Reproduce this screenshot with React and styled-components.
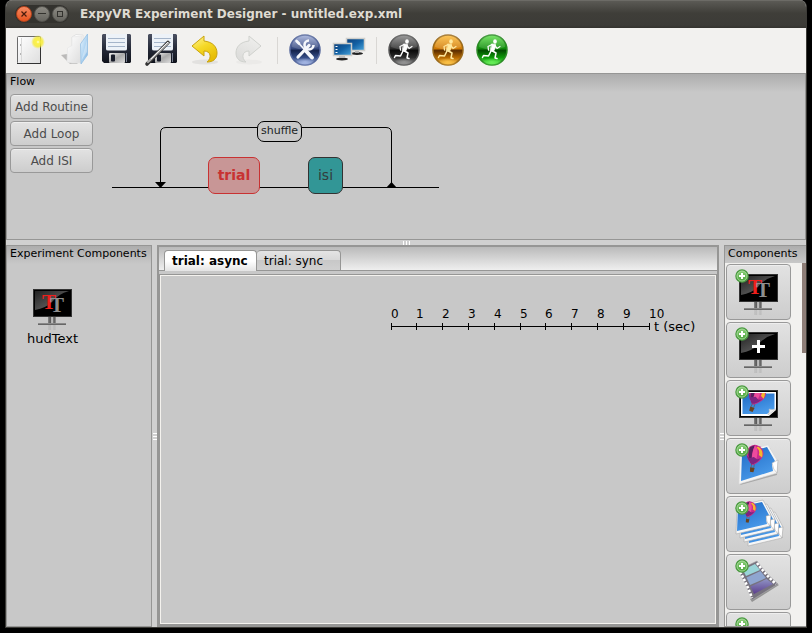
import React, { useState } from "react";
import styled, { createGlobalStyle, css } from "styled-components";

const GlobalStyle = createGlobalStyle`
  * { box-sizing: border-box; }
  body { margin: 0; background: #000; font-family: "DejaVu Sans", Verdana, sans-serif; color: #000; }
  button { font-family: inherit; padding: 0; margin: 0; }
  svg { display: block; }
`;

const line = "#969695";
const face = "#c8c8c8";

const Screen = styled.div`
  height: 100vh;
  padding: 0 5px 5px;
  background: #000;
`;

const Frame = styled.main`
  height: 100%;
  display: flex;
  flex-direction: column;
  overflow: hidden;
  border: 1px solid #3c3b37;
  border-top: 0;
  border-radius: 7px 7px 0 0;
  background: #d0d0d0;
`;

const TitleBar = styled.header`
  flex: none;
  height: 28px;
  display: flex;
  align-items: center;
  gap: 11px;
  padding: 0 9px 2px;
  background: linear-gradient(#5b5a55, #3f3e39 45%, #3c3b37 90%, #33322e);
  border-top: 1px solid #6c6b66;
`;

const Controls = styled.div`
  display: flex;
  align-items: center;
  gap: 2px;
  padding: 1px;
  border-radius: 10px;
  background: #33322e;
`;

const ControlButton = styled.button`
  width: 16px;
  height: 16px;
  border: 1px solid ${(p) => (p.$close ? "#b5441d" : "#55544f")};
  border-radius: 50%;
  color: ${(p) => (p.$close ? "#4a1c0c" : "#33322e")};
  background: ${(p) =>
    p.$close ? "linear-gradient(#f58a62, #e8541f)" : "linear-gradient(#8c8a83, #66655f)"};
`;

const Title = styled.h1`
  margin: 0;
  font-size: 12px;
  line-height: 16px;
  font-weight: bold;
  white-space: nowrap;
  color: #dfdbd2;
`;

const Toolbar = styled.div`
  flex: none;
  height: 45px;
  display: flex;
  align-items: flex-start;
  padding-left: 2px;
  background: #f2f1ef;
`;

const ToolButton = styled.button`
  width: 44px;
  height: 44px;
  border: 0;
  background: none;
`;

const Separator = styled.span`
  align-self: center;
  width: 1px;
  height: 27px;
  margin: 0 5px;
  background: #d9d7d4;
`;

const panel = css`
  border: 1px solid ${line};
  background: linear-gradient(#adadad, ${face} 18px);
`;

const PanelTitle = styled.h2`
  margin: 0;
  padding: 0 3px;
  font-size: 11px;
  line-height: 16px;
  font-weight: normal;
  white-space: nowrap;
`;

const FlowPanel = styled.section`
  ${panel}
  flex: none;
  height: 167px;
`;

const FlowBody = styled.div`
  display: flex;
  padding: 4px 3px 0;
`;

const FlowActions = styled.div`
  flex: none;
  width: 83px;
  display: flex;
  flex-direction: column;
  gap: 2px;
`;

const raised = css`
  border: 1px solid #999;
  border-radius: 4px;
  background: linear-gradient(#e2e2e2, #cdcdcd);
  box-shadow: inset 0 1px 0 #eee;
`;

const ActionButton = styled.button`
  ${raised}
  height: 25px;
  font-size: 12px;
  line-height: 16px;
  white-space: nowrap;
  color: #4c4c4c;
`;

const FlowCanvas = styled.div`
  position: relative;
  flex: 1;
  height: 140px;
`;

const FlowNode = styled.button`
  position: absolute;
  left: ${(p) => p.$x}px;
  top: ${(p) => p.$y}px;
  width: ${(p) => p.$w}px;
  height: ${(p) => p.$h}px;
  padding-bottom: 2px;
  border: 1px solid ${(p) => p.$edge};
  border-radius: 7px;
  background: ${(p) => p.$fill};
  color: ${(p) => p.$ink};
  font-size: ${(p) => p.$size}px;
  line-height: 16px;
  font-weight: ${(p) => (p.$bold ? "bold" : "normal")};
`;

const Sash = styled.div`
  flex: none;
  display: flex;
  align-items: center;
  justify-content: center;
  gap: 2px;
  flex-direction: ${(p) => (p.$vertical ? "column" : "row")};
  height: ${(p) => (p.$vertical ? "auto" : "5px")};
  background: #d0d0d0;
`;

const Grip = styled.i`
  width: ${(p) => (p.$vertical ? 4 : 1)}px;
  height: ${(p) => (p.$vertical ? 1 : 4)}px;
  background: #fff;
`;

const Lower = styled.div`
  flex: 1;
  min-height: 0;
  display: grid;
  grid-template-columns: 146px 5px minmax(0, 1fr) 5px 82px;
  grid-template-rows: minmax(0, 1fr);
`;

const SidePanel = styled.section`
  ${panel}
`;

const ComponentItem = styled.button`
  display: block;
  margin: 17px 0 0 13px;
  border: 0;
  background: none;
  font-size: 13px;
  line-height: 16px;
`;

const Notebook = styled.section`
  display: flex;
  flex-direction: column;
  border: 2px solid ${line};
  background: ${face};
`;

const TabStrip = styled.div`
  flex: none;
  height: 24px;
  display: flex;
  align-items: flex-end;
  padding-left: 5px;
  border-bottom: 1px solid ${line};
  background: linear-gradient(#bababa, #efefef);
`;

const Tab = styled.button`
  height: ${(p) => (p.$active ? 21 : 20)}px;
  width: ${(p) => (p.$active ? 93 : 84)}px;
  margin-bottom: ${(p) => (p.$active ? -1 : 0)}px;
  padding-left: 7px;
  text-align: left;
  border: 1px solid ${line};
  border-left-width: ${(p) => (p.$active ? 1 : 0)}px;
  border-bottom: 0;
  border-radius: 4px 4px 0 0;
  background: ${(p) =>
    p.$active
      ? "linear-gradient(#fff, #fff 50%, #e4e4e4)"
      : "linear-gradient(#e4e4e4, #d8d8d8 48%, #c8c8c8 50%, #d0d0d0)"};
  font-size: 12px;
  line-height: 16px;
  font-weight: ${(p) => (p.$active ? "bold" : "normal")};
  white-space: nowrap;
`;

const TabBody = styled.div`
  flex: 1;
  min-height: 0;
  margin: 4px 1px 1px;
  padding: 30px 0 0 226px;
  overflow: hidden;
  border: 1px solid #f4f2ee;
  outline: 1px solid ${line};
`;

const Palette = styled.section`
  display: flex;
  flex-direction: column;
  min-height: 0;
  border: 1px solid ${line};
  border-right: 0;
  background: #f2f1ef;
`;

const PaletteTitle = styled(PanelTitle)`
  flex: none;
  height: 17px;
  background: linear-gradient(#adadad, ${face});
`;

const PaletteBody = styled.div`
  flex: 1;
  min-height: 0;
  display: flex;
  justify-content: space-between;
`;

const PaletteList = styled.div`
  display: flex;
  flex-direction: column;
  gap: 2px;
  padding: 1px;
  overflow-y: auto;
  scrollbar-width: none;
`;

const PaletteButton = styled.button`
  ${raised}
  flex: none;
  width: 65px;
  height: 56px;
  overflow: hidden;
  svg { margin: -1px; }
`;

const ScrollThumb = styled.div`
  width: 4px;
  height: 90px;
  background: #8d7d77;
`;

function Tool({ label, children }) {
  return (
    <ToolButton aria-label={label}>
      <svg width="44" height="44" viewBox="0 0 44 44">{children}</svg>
    </ToolButton>
  );
}

function Stops({ list }) {
  return list.map(([o, c, a = 1]) => <stop key={o} offset={o} stopColor={c} stopOpacity={a} />);
}

function NewIcon() {
  return (
    <>
      <defs>
        <linearGradient id="paper" x2="1" y2="1"><Stops list={[[0, "#fff"], [1, "#dedede"]]} /></linearGradient>
        <radialGradient id="glow"><Stops list={[[0, "#ffffd0"], [0.25, "#fbf24a"], [0.65, "#f7ec2e", 0.8], [1, "#f7ec2e", 0]]} /></radialGradient>
      </defs>
      <rect x="9.500" y="8.500" width="23" height="27" rx="1" fill="url(#paper)" stroke="#6b6b6b" />
      <path d="M9 35.500H33M32.500 12V35" stroke="#333" fill="none" />
      <path d="M13.500 10V34" stroke="#d8d8d8" />
      <path d="M12 17h1M12 26h1" stroke="#777" />
      <circle cx="30" cy="14" r="7" fill="url(#glow)" />
    </>
  );
}

function OpenIcon() {
  return (
    <>
      <defs>
        <linearGradient id="flap" x2="1" y2="1"><Stops list={[[0, "#e9f5fe"], [0.5, "#b4d7f3"], [1, "#79afde"]]} /></linearGradient>
        <linearGradient id="fold" x2="1" y2="1"><Stops list={[[0, "#fff"], [1, "#dcdcdc"]]} /></linearGradient>
      </defs>
      <path d="M9 27L18 36H26L15 26Z" fill="#777" opacity=".45" />
      <path d="M20 9L24 6.500L31 7V30L20 30Z" fill="#fcfcfc" stroke="#e2e2e2" />
      <path d="M15.500 20L20 17.500V9L30 8V35H20L15 34Z" fill="url(#fold)" stroke="#e6e6e6" strokeWidth=".7" />
      <path d="M28.500 16L35.500 6V27L29 36Z" fill="url(#flap)" stroke="#8ebce2" strokeWidth=".7" />
      <path d="M29.500 32L35 12V24Z" fill="#fff" opacity=".35" />
    </>
  );
}

function Floppy({ x }) {
  return (
    <g transform={`translate(${x} 6)`}>
      <defs>
        <linearGradient id="disk" x2="0" y2="1"><Stops list={[[0, "#4c5162"], [0.5, "#252a38"], [1, "#10131c"]]} /></linearGradient>
        <linearGradient id="shutter" x2="1" y2="1"><Stops list={[[0, "#f2f2f2"], [0.5, "#a9a9a9"], [1, "#ddd"]]} /></linearGradient>
      </defs>
      <path d="M1 0H28L29 1V28L28 29H2L0 27V1Z" fill="url(#disk)" />
      <path d="M4 0H25V15Q25 16.500 23 16.500H6Q4 16.500 4 15Z" fill="#edf2f8" />
      <path d="M6 4.500H23M6 8.500H23M6 12.500H23" stroke="#a5b5ca" />
      <rect x="7" y="19" width="16" height="10" rx="1" fill="url(#shutter)" />
      <rect x="9" y="20.500" width="4" height="7" rx="1" fill="#171b28" />
      <path d="M24.500 19V28" stroke="#777e8f" />
    </g>
  );
}

function Pen() {
  return (
    <>
      <path d="M7 36L28 14.500" stroke="#333" strokeWidth="3.600" strokeLinecap="round" />
      <path d="M8 34L28 15" stroke="#aaa" strokeWidth="2.400" strokeLinecap="round" />
      <path d="M11 31L28 14" stroke="#f2f2f2" strokeWidth="1" />
    </>
  );
}

function Arrow({ muted }) {
  const id = muted ? "arrowMuted" : "arrowGold";
  return (
    <>
      <defs>
        <linearGradient id={id} x2=".5" y2="1">
          <Stops list={muted ? [[0, "#f1f1ef"], [1, "#dddddb"]] : [[0, "#fff6a0"], [0.5, "#f5d927"], [1, "#e7bd05"]]} />
        </linearGradient>
      </defs>
      <ellipse cx="21" cy="34" rx="13" ry="2.500" fill="#888" opacity={muted ? 0.06 : 0.15} />
      <path
        transform={muted ? "matrix(-1 0 0 1 41 0)" : undefined}
        d="M8 18L20 8V13C29 14 33 19 33 25C33 31 29 34 23 34C28 30 27 23 20 23V28Z"
        fill={`url(#${id})`}
        stroke={muted ? "#cfd1cd" : "#c9a30c"}
        strokeLinejoin="round"
      />
    </>
  );
}

function Orb({ id, colors, edge, children }) {
  return (
    <>
      <defs>
        <linearGradient id={id} x2="0" y2="1"><Stops list={[[0, colors[0]], [0.45, colors[1]], [0.52, colors[2]], [0.75, colors[3]], [1, colors[4]]]} /></linearGradient>
        <radialGradient id={`${id}Glow`}><Stops list={[[0, colors[4], 0.9], [1, colors[4], 0]]} /></radialGradient>
      </defs>
      <circle cx="22" cy="22" r="15" fill={`url(#${id})`} stroke={edge} strokeWidth="1.500" />
      <ellipse cx="22" cy="34" rx="10" ry="4" fill={`url(#${id}Glow)`} />
      <path d="M9 19A13 13 0 0 1 35 19Q22 24 9 19Z" fill="#fff" opacity=".15" />
      {children}
    </>
  );
}

function Runner({ color }) {
  return (
    <g fill="none" stroke={color} strokeLinecap="round" strokeLinejoin="round">
      <ellipse cx="25" cy="13.500" rx="1.800" ry="2.200" fill={color} stroke="none" />
      <path d="M22 16L25.500 16.500L25.500 19L23.500 23.500L20.500 23Z" fill={color} strokeWidth=".8" />
      <path d="M22 16.500L18 18.500L18.500 22" strokeWidth="1.300" />
      <path d="M25.500 18L27 20.500L30 18.500" strokeWidth="1.200" />
      <path d="M22.500 23L26 25L25 30L27 30.500" strokeWidth="1.500" />
      <path d="M21 23L18.500 28L13.500 27.500L12.500 29.500" strokeWidth="1.500" />
    </g>
  );
}

function ToolsMark() {
  return (
    <g fill="none" stroke="#f5f7fb" strokeLinecap="round">
      <path d="M15 29L26 17.500" strokeWidth="3.200" />
      <path d="M26 12.500A4.500 4.500 0 1 0 30.500 17" strokeWidth="2.600" strokeLinecap="butt" />
      <path d="M14.500 14L22 22" strokeWidth="1.800" />
      <path d="M23 23L29 29.500" strokeWidth="4" />
      <path d="M13.500 13L16 15.500" strokeWidth="2.600" />
    </g>
  );
}

function ScreensIcon() {
  return (
    <>
      <defs><linearGradient id="lcd" x2="1" y2="1"><Stops list={[[0, "#0c3e79"], [0.5, "#1261a4"], [1, "#4aa6dd"]]} /></linearGradient></defs>
      <ellipse cx="30" cy="25.500" rx="6" ry="1.500" fill="#222" />
      <path d="M28 22h4v3h-4z" fill="#aaa" />
      <rect x="19.500" y="10.500" width="18" height="12" fill="url(#lcd)" stroke="#cfcfcb" strokeWidth="1.500" />
      <ellipse cx="15" cy="31" rx="6" ry="1.500" fill="#222" />
      <path d="M12 28h6v2h-6z" fill="#bbb" />
      <rect x="6.500" y="15.500" width="18" height="12" fill="url(#lcd)" stroke="#cfcfcb" strokeWidth="1.500" />
      <path d="M8.500 18.500h2M8.500 21.500h2M8.500 24.500h2" stroke="#fff" />
    </>
  );
}

function Badge() {
  return (
    <g>
      <defs><linearGradient id="badge" x2="0" y2="1"><Stops list={[[0, "#8fd07d"], [1, "#46a236"]]} /></linearGradient></defs>
      <circle cx="16" cy="12" r="6" fill="url(#badge)" stroke="#4a9a40" strokeWidth="1.500" />
      <circle cx="16" cy="12" r="5" fill="none" stroke="#b3e0a6" strokeWidth=".8" />
      <path d="M16 9V15M13 12H19" stroke="#fff" strokeWidth="2" />
    </g>
  );
}

function Monitor({ children }) {
  return (
    <>
      <defs>
        <linearGradient id="glass" x2="1" y2="1"><Stops list={[[0, "#222"], [1, "#777"]]} /></linearGradient>
        <linearGradient id="stand"><Stops list={[[0, "#888"], [0.3, "#555"], [0.5, "#ddd"], [0.75, "#555"], [1, "#999"]]} /></linearGradient>
      </defs>
      <rect x="28" y="37" width="8" height="7" fill="url(#stand)" />
      <rect x="28" y="46" width="8" height="5" fill="url(#stand)" opacity=".15" />
      <path d="M18 45H46" stroke="#666" strokeWidth="2" />
      <path d="M18 44.500H46" stroke="#888" strokeWidth="1" />
      <rect x="13" y="10" width="39" height="28" fill="#000" />
      <rect x="13.500" y="10.500" width="38" height="27" fill="none" stroke="#333" />
      <path d="M15 12H49Q38 15 32 23Q26 29 15 31Z" fill="url(#glass)" />
      {children}
    </>
  );
}

function Letters() {
  return (
    <text fontFamily="Liberation Serif, serif" fontWeight="bold" fontSize="21">
      <tspan x="22" y="30" fill="#ee1f1c">T</tspan>
      <tspan x="30" y="33" fill="#8e8e8e">T</tspan>
    </text>
  );
}

function Balloon({ x, y, turn = 0, scale = 1 }) {
  return (
    <g transform={`translate(${x} ${y}) rotate(${turn}) scale(${scale})`}>
      <path d="M-9 -3A9.500 9.500 0 0 1 10 -3Q9 4 1 10H-1Q-8 4 -9 -3Z" fill="#c92a8c" />
      <path d="M-6 -9Q-9 0 -1 10Q-4 -2 -1 -12Z" fill="#57205f" />
      <path d="M-1 -12Q6 -7 2 9H0Q-4 0 -1 -12Z" fill="#ed4b9d" />
      <path d="M3 -11Q10 -8 9 0L5 -2Q6 -7 1 -10Z" fill="#f5b62c" />
      <path d="M-8 1L-4 3L0 1L4 3L8 1Q5 6 1 9H-1Q-6 6 -8 1Z" fill="#7d2581" />
      <path d="M-1 9V13M2 9V13" stroke="#655" strokeWidth=".7" />
      <path d="M-2 13H3L2.500 18H-1.500Z" fill="#69431e" />
    </g>
  );
}

function SkyPaint() {
  return <defs><linearGradient id="sky" x2=".5" y2="1"><Stops list={[[0, "#1f69c4"], [1, "#4a9bea"]]} /></linearGradient></defs>;
}

function MonitorPhoto() {
  return (
    <Monitor>
      <SkyPaint />
      <path d="M15 12H50V30L43 36H15Z" fill="#fff" />
      <path d="M16.500 13.500H48.500V29L41 34H16.500Z" fill="url(#sky)" />
      <path d="M42 35Q44 31 43 29Q47 30 50 29Z" fill="#eee" stroke="#bbb" strokeWidth=".5" />
      <clipPath id="photoArea"><path d="M16 13H49V34H16Z" /></clipPath>
      <g clipPath="url(#photoArea)"><Balloon x={30} y={16} turn={20} scale={0.9} /></g>
    </Monitor>
  );
}

function PhotoIcon() {
  return (
    <>
      <SkyPaint />
      <path d="M14 47L51 37L52 24L44 10Z" fill="#000" opacity=".2" />
      <path d="M14 14L42 7L51 22L48 26L51 35L13 46Z" fill="#f5f5f5" stroke="#ddd" strokeWidth=".6" />
      <path d="M16 16L41 9L49 23L46 27L47 33L15 43Z" fill="url(#sky)" />
      <path d="M46 25Q50 23 52 22L51 35Q47 32 46 25Z" fill="#fff" stroke="#aaa" strokeWidth=".5" />
      <Balloon x={28} y={18} turn={10} scale={0.9} />
    </>
  );
}

function PhotoStack() {
  return (
    <>
      <SkyPaint />
      {[3, 2, 1, 0].map((i) => (
        <g key={i} transform={`translate(${i * 4} ${i * 4})`}>
          <path d="M11 10L37 4L45 19L42 22L44 30L10 38Z" fill="#f7f7f7" stroke="#aaa" strokeWidth=".6" />
          <path d="M12 11L36 6L43 19L40 23L41 28L11 35Z" fill="url(#sky)" />
          <path d="M40 20L45 19L44 30Q40 27 40 20Z" fill="#fff" stroke="#999" strokeWidth=".5" />
        </g>
      ))}
      <Balloon x={23} y={14} turn={10} scale={0.7} />
    </>
  );
}

function FilmIcon() {
  return (
    <>
      <defs>
        <linearGradient id="cell" x2="0" y2="1"><Stops list={[[0, "#8f93c4"], [1, "#5c3f8d"]]} /></linearGradient>
      </defs>
      <path d="M26 48L53 31L50 29L24 45Z" fill="#000" opacity=".3" />
      <path d="M12 16L31 7Q40 20 52 30L26 46Q20 30 12 16Z" fill="#77737f" stroke="#aaa" strokeWidth=".6" />
      <path d="M17 16L29 10L34 16L20 22Z" fill="#9ad4d8" />
      <path d="M20.500 23.500L34.500 17L40 24L24 31Z" fill="#8fa6d0" />
      <path d="M24.500 32.500L40.500 25L47 30L28 40Z" fill="url(#cell)" />
      <path d="M14 18Q21 30 26 44" stroke="#fff" strokeWidth="2.600" strokeDasharray="2.500 1.500" fill="none" />
      <path d="M31 9Q39 20 50 30" stroke="#fff" strokeWidth="2.600" strokeDasharray="2.500 1.500" fill="none" />
    </>
  );
}

const palette = [
  ["Add text", <Monitor key="a"><Letters /></Monitor>],
  ["Add fixation cross", <Monitor key="b"><path d="M32.500 18V31M26 24.500H39" stroke="#fff" strokeWidth="3" /></Monitor>],
  ["Add image overlay", <MonitorPhoto key="c" />],
  ["Add image", <PhotoIcon key="d" />],
  ["Add image sequence", <PhotoStack key="e" />],
  ["Add video", <FilmIcon key="f" />],
  ["Add component", null],
];

const ticks = [0, 1, 2, 3, 4, 5, 6, 7, 8, 9, 10];

function Timeline() {
  return (
    <svg width="310" height="32" viewBox="0 0 310 32" fontFamily="DejaVu Sans, sans-serif" role="img" aria-label="Time axis in seconds">
      <g stroke="#000" shapeRendering="crispEdges">
        <path d="M4 20.500H263" />
        {ticks.map((t) => <path key={t} d={`M${Math.floor(t * 25.8) + 4}.500 17V24`} />)}
      </g>
      {ticks.map((t) => <text key={t} x={Math.floor(t * 25.8) + 4} y="12" fontSize="12">{t}</text>)}
      <text x="267" y="25" fontSize="13">t (sec)</text>
    </svg>
  );
}

function FlowLines() {
  return (
    <svg width="348" height="110" viewBox="0 0 348 110" aria-hidden="true">
      <g fill="none" stroke="#000">
        <path d="M19 93.500H346" />
        <path d="M67.500 93V39Q67.500 33.500 73 33.500H293Q298.500 33.500 298.500 39V93" />
      </g>
      <path d="M62 88H73L67.500 94Z" />
      <path d="M293 94H304L298.500 88Z" />
    </svg>
  );
}

const blackOrb = ["#8c8c8c", "#2c2c2c", "#0a0a0a", "#2d2d2d", "#999"];
const amberOrb = ["#ffbe3c", "#d07a05", "#5b2d00", "#b56800", "#ffc64a"];
const greenOrb = ["#63e44f", "#0e8a0a", "#034c02", "#0c9a08", "#6bf25c"];
const blueOrb = ["#a3b1dc", "#34477d", "#15234c", "#344c86", "#a9bbe8"];

export default function App() {
  const [tab, setTab] = useState(0);
  return (
    <Screen>
      <GlobalStyle />
      <Frame>
        <TitleBar>
          <Controls>
            <ControlButton $close aria-label="Close">
              <svg width="14" height="14"><path d="M4.500 4.500L9.500 9.500M9.500 4.500L4.500 9.500" stroke="currentColor" strokeWidth="1.200" /></svg>
            </ControlButton>
            <ControlButton aria-label="Minimize">
              <svg width="14" height="14"><path d="M3 6.500H11" stroke="currentColor" /></svg>
            </ControlButton>
            <ControlButton aria-label="Maximize">
              <svg width="14" height="14"><rect x="4.500" y="4.500" width="5" height="5" fill="none" stroke="currentColor" /></svg>
            </ControlButton>
          </Controls>
          <Title>ExpyVR Experiment Designer - untitled.exp.xml</Title>
        </TitleBar>

        <Toolbar>
          <Tool label="New"><NewIcon /></Tool>
          <Tool label="Open"><OpenIcon /></Tool>
          <Tool label="Save"><Floppy x={6} /></Tool>
          <Tool label="Save as"><Floppy x={8} /><Pen /></Tool>
          <Tool label="Undo"><Arrow /></Tool>
          <Tool label="Redo"><Arrow muted /></Tool>
          <Separator />
          <Tool label="Preferences"><Orb id="orbBlue" colors={blueOrb} edge="#53659a"><ToolsMark /></Orb></Tool>
          <Tool label="Displays"><ScreensIcon /></Tool>
          <Separator />
          <Tool label="Run"><Orb id="orbBlack" colors={blackOrb} edge="#555"><Runner color="#fff" /></Orb></Tool>
          <Tool label="Run test"><Orb id="orbAmber" colors={amberOrb} edge="#9a6a1c"><Runner color="#ffe9a0" /></Orb></Tool>
          <Tool label="Run experiment"><Orb id="orbGreen" colors={greenOrb} edge="#2a8a24"><Runner color="#fff" /></Orb></Tool>
        </Toolbar>

        <FlowPanel>
          <PanelTitle>Flow</PanelTitle>
          <FlowBody>
            <FlowActions>
              <ActionButton>Add Routine</ActionButton>
              <ActionButton>Add Loop</ActionButton>
              <ActionButton>Add ISI</ActionButton>
            </FlowActions>
            <FlowCanvas>
              <FlowLines />
              <FlowNode $x={164} $y={27} $w={45} $h={21} $edge="#000" $fill={face} $ink="#1b1f24" $size={11}>shuffle</FlowNode>
              <FlowNode $x={115} $y={63} $w={52} $h={37} $edge="#c83232" $fill="#c89696" $ink="#c83232" $size={14} $bold>trial</FlowNode>
              <FlowNode $x={215} $y={63} $w={35} $h={37} $edge="#323232" $fill="#329696" $ink="#323c3c" $size={14}>isi</FlowNode>
            </FlowCanvas>
          </FlowBody>
        </FlowPanel>

        <Sash><Grip /><Grip /><Grip /></Sash>

        <Lower>
          <SidePanel>
            <PanelTitle>Experiment Components</PanelTitle>
            <ComponentItem>
              <svg width="65" height="52" viewBox="0 0 65 52"><Monitor><Letters /></Monitor></svg>
              hudText
            </ComponentItem>
          </SidePanel>
          <Sash $vertical><Grip $vertical /><Grip $vertical /><Grip $vertical /></Sash>
          <Notebook>
            <TabStrip role="tablist">
              {["trial: async", "trial: sync"].map((name, i) => (
                <Tab key={name} role="tab" aria-selected={tab === i} $active={tab === i} onClick={() => setTab(i)}>{name}</Tab>
              ))}
            </TabStrip>
            <TabBody role="tabpanel"><Timeline /></TabBody>
          </Notebook>
          <Sash $vertical><Grip $vertical /><Grip $vertical /><Grip $vertical /></Sash>
          <Palette>
            <PaletteTitle>Components</PaletteTitle>
            <PaletteBody>
              <PaletteList>
                {palette.map(([label, icon]) => (
                  <PaletteButton key={label} aria-label={label}>
                    <svg width="65" height="56" viewBox="0 0 65 56">{icon}<Badge /></svg>
                  </PaletteButton>
                ))}
              </PaletteList>
              <ScrollThumb />
            </PaletteBody>
          </Palette>
        </Lower>
      </Frame>
    </Screen>
  );
}
